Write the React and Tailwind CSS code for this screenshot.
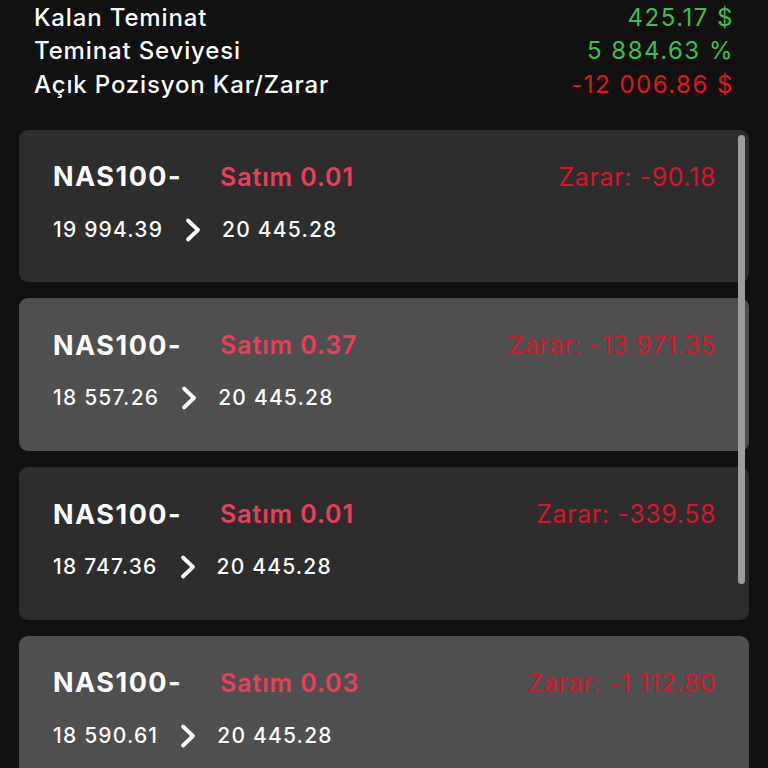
import React from 'react'

const summary = [
  { label: 'Kalan Teminat', value: '425.17 $', color: 'text-[#3fbf4f]' },
  { label: 'Teminat Seviyesi', value: '5 884.63 %', color: 'text-[#3fbf4f]' },
  { label: 'Açık Pozisyon Kar/Zarar', value: '-12 006.86 $', color: 'text-[#e5141f]' },
]

const positions = [
  { side: 'Satım 0.01', open: '19 994.39', pnl: '-90.18', bg: 'bg-[#2d2d2d]' },
  { side: 'Satım 0.37', open: '18 557.26', pnl: '-13 971.35', bg: 'bg-[#4f4f4f]' },
  { side: 'Satım 0.01', open: '18 747.36', pnl: '-339.58', bg: 'bg-[#2d2d2d]' },
  { side: 'Satım 0.03', open: '18 590.61', pnl: '-1 112.80', bg: 'bg-[#4f4f4f]' },
]

function Chevron() {
  return (
    <svg width="18" height="26" viewBox="0 0 18 26" className="shrink-0">
      <polyline points="4,3.5 14,13 4,22.5" fill="none" stroke="white" strokeWidth="3.8" strokeLinecap="round" strokeLinejoin="round" />
    </svg>
  )
}

function PositionCard({ p }) {
  return (
    <div className={`${p.bg} rounded-[9px] h-[152.7px] pl-[34px] pr-[33px] pt-[30px]`}>
      <div className="flex items-center h-[36px]">
        <span className="text-white font-bold text-[27px] tracking-[1.5px] w-[167px]">NAS100-</span>
        <span className="text-[#ec3d5a] font-semibold text-[25px] tracking-[0.9px]">{p.side}</span>
        <span className="ml-auto text-[#d8152a] text-[25px] tracking-[0.6px]">Zarar: {p.pnl}</span>
      </div>
      <div className="flex items-center h-[30px] mt-[19px] text-white font-medium text-[21px] tracking-[1.2px]">
        <span>{p.open}</span>
        <span className="ml-[21px] mr-[20px]"><Chevron /></span>
        <span>20 445.28</span>
      </div>
    </div>
  )
}

export default function App() {
  return (
    <div className="w-[768px] h-[768px] overflow-hidden bg-[#111111] font-['Inter',sans-serif]">
      <div className="px-[34px] pt-[1px]">
        {summary.map((s) => (
          <div key={s.label} className="flex justify-between items-center h-[33.5px] text-[24px]">
            <span className="text-white font-medium tracking-[0.85px]">{s.label}</span>
            <span className={`${s.color} tracking-[1.5px]`}>{s.value}</span>
          </div>
        ))}
      </div>
      <div className="relative mt-[28px] px-[19px] flex flex-col gap-[16px]">
        {positions.map((p, i) => (
          <PositionCard key={i} p={p} />
        ))}
        <div className="absolute right-[23px] top-[5px] w-[7px] h-[449px] rounded-full bg-[#9c9c9c]" />
      </div>
    </div>
  )
}
